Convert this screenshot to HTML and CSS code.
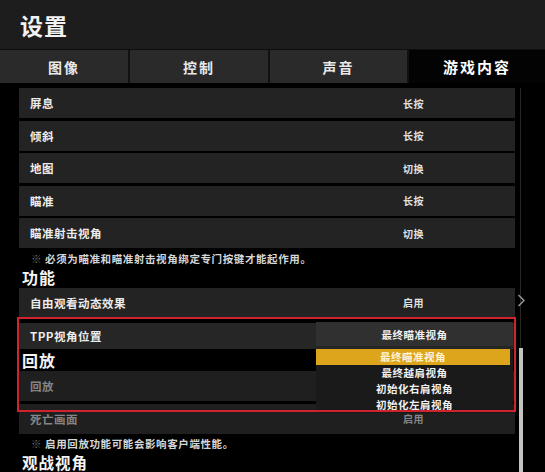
FILE: index.html
```html
<!DOCTYPE html>
<html lang="zh">
  <head>
    <meta charset="UTF-8" />
    <title>设置</title>
    <link rel="stylesheet" href="styles.css">
  </head>
  <body>
    <header class="topbar">
      <h1>设置</h1>
    </header>

    <nav class="tabs">
      <div class="tab">图像</div>
      <div class="tab">控制</div>
      <div class="tab">声音</div>
      <div class="tab active">游戏内容</div>
    </nav>

    <main class="content">
      <div class="list">
        <div class="row"><span>屏息</span><span class="value">长按</span></div>
        <div class="row"><span>倾斜</span><span class="value">长按</span></div>
        <div class="row"><span>地图</span><span class="value">切换</span></div>
        <div class="row"><span>瞄准</span><span class="value">长按</span></div>
        <div class="row"><span>瞄准射击视角</span><span class="value">切换</span></div>
        <p class="note"><span class="mark">※</span> 必须为瞄准和瞄准射击视角绑定专门按键才能起作用。</p>

        <h2 class="section">功能</h2>
        <div class="row"><span>自由观看动态效果</span><span class="value">启用</span></div>
        <div class="row tpp"><span>TPP视角位置</span></div>
        <div class="split"></div>

        <h2 class="section">回放</h2>
        <div class="row dim"><span>回放</span></div>
        <div class="row dim"><span>死亡画面</span><span class="value">启用</span></div>
        <p class="note"><span class="mark">※</span> 启用回放功能可能会影响客户端性能。</p>

        <h2 class="section last">观战视角</h2>
      </div>

      <div class="scrollbar">
        <div class="thumb"></div>
      </div>

      <!-- dropdown opened over the rows -->
      <div class="dropdown">
        <div class="dropdown-head">最终瞄准视角</div>
        <ul class="options">
          <li class="selected">最终瞄准视角</li>
          <li>最终越肩视角</li>
          <li>初始化右肩视角</li>
          <li>初始化左肩视角</li>
        </ul>
      </div>

      <div class="highlight-box"></div>

      <div class="chevron">
        <svg width="9" height="13" viewBox="0 0 9 13">
          <polyline points="1.5,1 7,6.5 1.5,12" fill="none" stroke="#9a9a9a" stroke-width="1.4" />
        </svg>
      </div>
    </main>
  </body>
</html>
```

FILE: styles.css
```css
* {
  padding: 0;
  margin: 0;
  box-sizing: border-box;
}

body {
  width: 545px;
  height: 472px;
  overflow: hidden;
  background-color: #000;
  color: #fff;
  font-family: "Noto Sans CJK SC", "Noto Sans", sans-serif;
}

.topbar {
  height: 50px;
  background-color: #1d1d1d;
  display: flex;
  align-items: center;
  padding-left: 20px;
  border-bottom: 1px solid #0e0e0e;
}

.topbar h1 {
  font-size: 23px;
  font-weight: 700;
  color: #f2f2f2;
  letter-spacing: 1px;
}

.tabs {
  display: grid;
  grid-template-columns: 130px 140px 139px 1fr;
  height: 33px;
  background-color: #2a2a2a;
}

.tab {
  display: flex;
  justify-content: center;
  align-items: center;
  font-size: 14px;
  font-weight: 700;
  color: #e8e8e8;
  letter-spacing: 2px;
  border-right: 2px solid #121212;
}

.tab.active {
  background-color: #030303;
  border-right: none;
  font-size: 15px;
  color: #fff;
}

.content {
  position: relative;
  display: flex;
  gap: 4px;
  padding: 5px 0 0 19px;
  height: 389px;
}

.list {
  width: 496px;
  display: flex;
  flex-direction: column;
}

.row {
  height: 30px;
  flex-shrink: 0;
  margin-bottom: 2.5px;
  background-color: #232323;
  display: grid;
  grid-template-columns: 373px 1fr;
  align-items: center;
  padding-left: 11px;
  font-size: 11.5px;
  font-weight: 700;
  color: #ececec;
  letter-spacing: 0.5px;
}

.row .value {
  font-size: 10px;
  color: #e0e0e0;
}

.row.tpp {
  margin-top: 3px;
  height: 26px;
  margin-bottom: 1px;
  background-color: #262626;
}

.row.dim {
  color: #858585;
  background-color: #1f1f1f;
}

.row.dim .value {
  color: #858585;
}

.split {
  height: 2px;
  background: linear-gradient(to right, #8a8a8a, #5c5c5c 50%, #2a2a2a);
}

.note {
  height: 16px;
  font-size: 10.5px;
  font-weight: 700;
  color: #d6d6d6;
  padding-left: 12px;
  line-height: 16px;
  letter-spacing: 0.6px;
}

.note .mark {
  color: #6f6f6f;
}

.section {
  font-size: 16px;
  font-weight: 700;
  color: #f4f4f4;
  margin-left: 3px;
  height: 21px;
  line-height: 21px;
  letter-spacing: 1px;
}

.section.last {
  height: 20px;
  line-height: 20px;
  font-size: 15.5px;
}

.scrollbar {
  position: relative;
  width: 4px;
  height: 100%;
  background: linear-gradient(to right, transparent 1px, #262626 1px, #262626 2px, transparent 2px);
}

.thumb {
  position: absolute;
  left: 0;
  top: 260px;
  width: 4px;
  height: 130px;
  background-color: #c4c4c4;
}

.dropdown {
  position: absolute;
  left: 316px;
  top: 239px;
  width: 197px;
}

.dropdown-head {
  height: 24px;
  background-color: #303030;
  display: flex;
  justify-content: center;
  align-items: center;
  font-size: 10.5px;
  font-weight: 700;
  color: #f0f0f0;
  letter-spacing: 0.5px;
}

.options {
  list-style: none;
  margin-top: 3px;
  background-color: #1a1a1a;
}

.options li {
  height: 16px;
  line-height: 16px;
  text-align: center;
  font-size: 10.5px;
  font-weight: 700;
  color: #f0f0f0;
  letter-spacing: 0.5px;
}

.options li.selected {
  background-color: #dca51c;
  color: #fff4d8;
  margin-right: 3px;
}

.highlight-box {
  position: absolute;
  left: 17px;
  top: 234px;
  width: 499px;
  height: 95px;
  border: 2px solid #cf2430;
}

.chevron {
  position: absolute;
  left: 517px;
  top: 205px;
}
```
